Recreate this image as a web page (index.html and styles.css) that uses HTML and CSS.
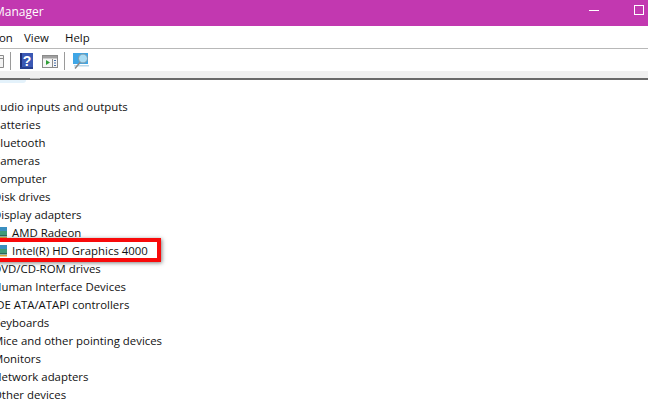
FILE: index.html
```html
<!DOCTYPE html>
<html lang="en">
<head>
<meta charset="utf-8">
<title>Device Manager</title>
<link rel="stylesheet" href="styles.css">
</head>
<body>
<div class="app">
  <header class="title">
    <span class="title-text">Manager</span>
    <div class="win">
      <span class="min"></span>
      <span class="max"></span>
    </div>
  </header>
  <nav class="menu">
    <span class="m-action">on</span>
    <span class="m-view">View</span>
    <span class="m-help">Help</span>
  </nav>
  <div class="tools">
    <svg class="ic-cut" width="4" height="13" viewBox="0 0 4 13"><path d="M0 .5h3.500v12H0" fill="#f4f4f4" stroke="#8a8a8a"/><path d="M0 3.500h3" stroke="#8a8a8a"/></svg>
    <span class="sep"></span>
    <svg class="ic-help" width="13" height="16" viewBox="0 0 13 16"><rect width="13" height="16" fill="#3a58b4"/><rect width="2" height="16" fill="#1e2f78"/><rect y="14" width="13" height="2" fill="#263f90"/><text x="7" y="13" class="q">?</text></svg>
    <svg class="ic-prop" width="16" height="13" viewBox="0 0 16 13"><rect x=".5" y=".5" width="15" height="12" fill="#f6f6f6" stroke="#8b8b8b"/><rect x="1" y="1" width="14" height="2.500" fill="#a0a0a0"/><path d="M4 5l4 2.500-4 2.500z" fill="#2f9e36"/><path d="M10.500 4v8" stroke="#8b8b8b"/><path d="M12 5.500h2M12 8h2M12 10.500h2" stroke="#4a6fa8"/></svg>
    <span class="sep sep2"></span>
    <svg class="ic-scan" width="16" height="16" viewBox="0 0 16 16"><rect width="15" height="11" fill="#3fa6e6"/><rect y="12" x="1" width="15" height="1.500" fill="#b9d8ea"/><circle cx="10" cy="5.500" r="4.500" fill="#a9dcf4" stroke="#7c98a8"/><path d="M7 9.500l-5 6" stroke="#8a8a8a" stroke-width="1.500"/></svg>
  </div>
  <div class="strip"></div>
  <main class="tree">
    <div class="row">Audio inputs and outputs</div>
    <div class="row">Batteries</div>
    <div class="row">Bluetooth</div>
    <div class="row">Cameras</div>
    <div class="row">Computer</div>
    <div class="row">Disk drives</div>
    <div class="row">Display adapters</div>
    <div class="row child"><svg class="gpu" width="7" height="12" viewBox="0 0 7 12"><rect width="7" height="4" fill="#3a8fc0"/><rect y="4" width="7" height="4" fill="#3f9a78"/><rect y="8" width="7" height="1.500" fill="#2c6a5a"/><rect y="10" width="7" height="1.500" fill="#d8a63a"/></svg>AMD Radeon</div>
    <div class="row child hl"><svg class="gpu" width="7" height="12" viewBox="0 0 7 12"><rect width="7" height="4" fill="#3a8fc0"/><rect y="4" width="7" height="4" fill="#3f9a78"/><rect y="8" width="7" height="1.500" fill="#2c6a5a"/><rect y="10" width="7" height="1.500" fill="#d8a63a"/></svg>Intel(R) HD Graphics 4000</div>
    <div class="row">DVD/CD-ROM drives</div>
    <div class="row">Human Interface Devices</div>
    <div class="row">IDE ATA/ATAPI controllers</div>
    <div class="row">Keyboards</div>
    <div class="row">Mice and other pointing devices</div>
    <div class="row">Monitors</div>
    <div class="row">Network adapters</div>
    <div class="row">Other devices</div>
  </main>
</div>
</body>
</html>
```
FILE: styles.css
```css
html, body { margin: 0; padding: 0; }
body { width: 648px; height: 400px; overflow: hidden; background: #fff; font-family: "Open Sans", "Noto Sans", sans-serif; font-size: 11.400px; color: #111; }
.app { height: 400px; overflow: hidden; display: flex; flex-direction: column; }
.title { flex: 0 0 26px; background: #c238b0; display: flex; align-items: center; justify-content: space-between; color: #fff; }
.title-text { font-size: 12px; margin-left: -6px; margin-top: -4px; }
.win { display: flex; align-items: center; gap: 35px; padding-right: 4px; margin-top: -6px; }
.min { width: 10px; height: 1px; background: #fff; }
.max { width: 8px; height: 8px; border: 1px solid #fff; }
.menu { flex: 0 0 23px; box-sizing: border-box; border-bottom: 1px solid #b8b8b8; display: flex; align-items: center; }
.m-action { margin-left: -1px; width: 25px; }
.m-view { width: 41px; }
.tools { flex: 0 0 22px; box-sizing: border-box; padding-top: 2px; display: flex; align-items: center; }
.ic-cut { margin-right: 6px; }
.sep { width: 1px; height: 18px; background: #9a9a9a; }
.ic-help { margin-left: 9px; }
.ic-prop { margin-left: 9px; }
.sep2 { margin-left: 6px; }
.ic-scan { margin-left: 8px; }
.q { font: bold 14px "Liberation Sans", sans-serif; fill: #fff; text-anchor: middle; }
.strip { flex: 0 0 9px; box-sizing: border-box; background: #f0f0f0; border-bottom: 2px solid #6a6a6a; position: relative; }
.strip::before { content: ""; position: absolute; left: 30px; bottom: -1px; width: 10px; height: 1px; background: #b5b5b5; }
.strip::after { content: ""; position: absolute; left: -20px; top: 9px; width: 46px; height: 3px; border-radius: 0 0 20px 20px; background: #e4f2fb; }
.tree { padding-top: 18px; margin-left: -7px; }
.row { height: 18px; line-height: 18px; white-space: nowrap; }
.child { display: flex; align-items: center; padding-left: 7px; }
.gpu { margin-right: 5px; flex: none; }
.hl { position: relative; }
.hl::after { content: ""; position: absolute; left: 0; top: -4px; width: 160px; height: 16px; border: 4px solid #f80a0a; box-shadow: 1px 1px 4px rgba(0,0,0,.5); }
```
